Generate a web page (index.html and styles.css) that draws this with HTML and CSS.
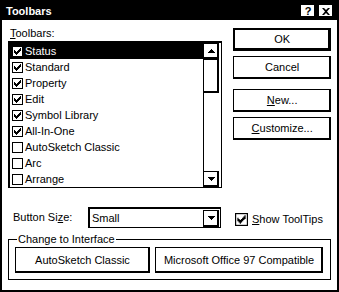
FILE: index.html
```html
<!DOCTYPE html>
<html lang="en">
<head>
    <meta charset="UTF-8">
    <title>Toolbars</title>
    <link rel="stylesheet" href="styles.css">
</head>
<body>
    <!-- shared glyphs -->
    <svg class="defs" width="0" height="0">
        <symbol id="cb-on" viewBox="0 0 11 11">
            <rect x="0.5" y="0.5" width="10" height="10" fill="#fff" stroke="#000"/>
            <path d="M8 2h1v1h-1zM7 3h2v1h-2zM2 4h1v1h-1zM6 4h3v1h-3zM2 5h2v1h-2zM5 5h3v1h-3zM2 6h5v1h-5zM3 7h3v1h-3zM4 8h1v1h-1z" fill="#000"/>
        </symbol>
        <symbol id="cb-off" viewBox="0 0 11 11">
            <rect x="0.5" y="0.5" width="10" height="10" fill="#fff" stroke="#000"/>
        </symbol>
        <symbol id="arrow-up" viewBox="0 0 7 4">
            <path d="M3 0h1v1h-1zM2 1h3v1h-3zM1 2h5v1h-5zM0 3h7v1h-7z" fill="#000"/>
        </symbol>
        <symbol id="arrow-down" viewBox="0 0 7 4">
            <path d="M0 0h7v1h-7zM1 1h5v1h-5zM2 2h3v1h-3zM3 3h1v1h-1z" fill="#000"/>
        </symbol>
    </svg>

    <div class="dialog">
        <div class="titlebar">
            <span class="title">Toolbars</span>
            <span class="caption-btns">
                <span class="cap-btn">?</span>
                <span class="cap-btn">
                    <svg width="8" height="7" viewBox="0 0 8 7"><path d="M0 0h2l2 2 2-2h2l-3 3.5 3 3.5h-2l-2-2-2 2h-2l3-3.5z" fill="#000"/></svg>
                </span>
            </span>
        </div>

        <div class="content">
            <div class="top">
                <div class="list-col">
                    <div class="label"><u>T</u>oolbars:</div>
                    <div class="listbox">
                        <ul class="items">
                            <li class="item selected"><svg class="cb"><use href="#cb-on"/></svg>Status</li>
                            <li class="item"><svg class="cb"><use href="#cb-on"/></svg>Standard</li>
                            <li class="item"><svg class="cb"><use href="#cb-on"/></svg>Property</li>
                            <li class="item"><svg class="cb"><use href="#cb-on"/></svg>Edit</li>
                            <li class="item"><svg class="cb"><use href="#cb-on"/></svg>Symbol Library</li>
                            <li class="item"><svg class="cb"><use href="#cb-on"/></svg>All-In-One</li>
                            <li class="item"><svg class="cb"><use href="#cb-off"/></svg>AutoSketch Classic</li>
                            <li class="item"><svg class="cb"><use href="#cb-off"/></svg>Arc</li>
                            <li class="item"><svg class="cb"><use href="#cb-off"/></svg>Arrange</li>
                        </ul>
                        <div class="scrollbar">
                            <div class="sb-btn"><svg class="arrow"><use href="#arrow-up"/></svg></div>
                            <div class="sb-thumb"></div>
                            <div class="sb-track"></div>
                            <div class="sb-btn"><svg class="arrow"><use href="#arrow-down"/></svg></div>
                        </div>
                    </div>
                </div>

                <div class="btn-col">
                    <button class="btn btn-default">OK</button>
                    <button class="btn">Cancel</button>
                    <button class="btn btn-sep"><u>N</u>ew...</button>
                    <button class="btn"><u>C</u>ustomize...</button>
                </div>
            </div>

            <div class="size-row">
                <span class="size-label">Button Si<u>z</u>e:</span>
                <div class="combo">
                    <span>Small</span>
                    <span class="combo-btn"><svg class="arrow"><use href="#arrow-down"/></svg></span>
                </div>
                <label class="tip">
                    <svg class="cb-big"><use href="#cb-on"/></svg>
                    <span><u>S</u>how ToolTips</span>
                </label>
            </div>

            <fieldset class="group">
                <legend>Change to Interface</legend>
                <div class="group-btns">
                    <button class="btn btn-wide">AutoSketch Classic</button>
                    <button class="btn btn-wider">Microsoft Office 97 Compatible</button>
                </div>
            </fieldset>
        </div>
    </div>
</body>
</html>
```

FILE: styles.css
```css
body {
    margin: 0;
    background: #fff;
    color: #000;
    font-family: "Liberation Sans", Arial, sans-serif;
    font-size: 11px;
    line-height: 13px;
}

.defs {
    position: absolute;
}

/* Window frame */
.dialog {
    width: 339px;
    height: 292px;
    box-sizing: border-box;
    border: 2px solid #000;
    display: flex;
    flex-direction: column;
}

.titlebar {
    height: 18px;
    flex-shrink: 0;
    background: #000;
    color: #fff;
    display: flex;
    align-items: center;
    justify-content: space-between;
    padding: 0 3px 0 4px;
}

.title {
    font-weight: bold;
}

.caption-btns {
    display: flex;
    gap: 2px;
}

.cap-btn {
    width: 16px;
    height: 14px;
    box-sizing: border-box;
    background: #fff;
    color: #000;
    border: 1px solid #000;
    box-shadow: inset -1px -1px #000;
    font-weight: bold;
    display: flex;
    align-items: center;
    justify-content: center;
}

/* Dialog body */
.content {
    flex: 1;
    padding: 0 6px;
    display: flex;
    flex-direction: column;
}

.top {
    display: flex;
    gap: 11px;
}

.list-col {
    width: 215px;
}

.label {
    margin-top: 7px;
    padding-left: 2px;
}

.listbox {
    margin-top: 1px;
    height: 147px;
    box-sizing: border-box;
    border: solid #000;
    border-width: 2px 1px 1px 2px;
    padding-right: 2px;
    display: flex;
}

.items {
    list-style: none;
    margin: 0;
    padding: 0;
    flex: 1;
}

.item {
    height: 16px;
    display: flex;
    align-items: center;
    gap: 2px;
    padding-left: 2px;
}

.item.selected {
    background: #000;
    color: #fff;
}

.cb {
    width: 11px;
    height: 11px;
    flex-shrink: 0;
}

.scrollbar {
    width: 16px;
    display: flex;
    flex-direction: column;
}

.sb-btn, .sb-thumb, .combo-btn {
    box-sizing: border-box;
    background: #fff;
    border: 1px solid #000;
    box-shadow: inset -1px -1px #000;
}

.sb-btn {
    height: 16px;
    display: flex;
    align-items: center;
    justify-content: center;
}

.sb-thumb {
    height: 34px;
}

.sb-track {
    flex: 1;
    border-left: 1px solid #000;
}

.arrow {
    width: 7px;
    height: 4px;
}

/* Push buttons */
.btn-col {
    width: 98px;
    display: flex;
    flex-direction: column;
    padding-top: 8px;
}

.btn {
    height: 23px;
    padding: 0;
    font: inherit;
    color: #000;
    background: #fff;
    border: 1px solid #000;
    box-shadow: inset -1px -1px #000;
}

.btn + .btn {
    margin-top: 5px;
}

.btn-col .btn-sep {
    margin-top: 10px;
}

.btn-default {
    border-width: 2px;
}

/* Button size row */
.size-row {
    margin-top: 19px;
    height: 21px;
    display: flex;
    align-items: center;
}

.size-label {
    width: 75px;
    padding-left: 5px;
}

.combo {
    width: 133px;
    height: 21px;
    box-sizing: border-box;
    border: solid #000;
    border-width: 2px 1px 1px 2px;
    padding-left: 2px;
    display: flex;
    align-items: center;
    justify-content: space-between;
}

.combo-btn {
    width: 16px;
    height: 17px;
    margin-right: 1px;
    display: flex;
    align-items: center;
    justify-content: center;
}

.tip {
    margin-left: 14px;
    margin-top: 3px;
    display: flex;
    align-items: center;
    gap: 4px;
}

.cb-big {
    width: 13px;
    height: 13px;
}

/* Group box */
.group {
    margin: 5px 0 0;
    width: 323px;
    box-sizing: border-box;
    padding: 0 6px 6px;
    border: 1px solid #000;
}

.group legend {
    margin-left: 2px;
    padding: 0 1px;
}

.group-btns {
    margin-top: 1px;
    display: flex;
    gap: 5px;
}

.group-btns .btn {
    height: 26px;
    margin: 0;
}

.btn-wide {
    width: 135px;
}

.btn-wider {
    width: 168px;
}
```
